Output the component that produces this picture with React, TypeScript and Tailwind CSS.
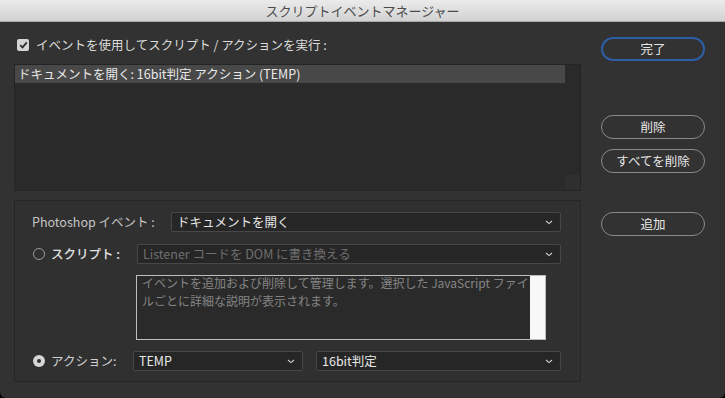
import React from "react";

const font = { fontFamily: '"Noto Sans CJK JP", "Noto Sans", sans-serif' };

function Chevron() {
  return (
    <svg width="8" height="5" viewBox="0 0 8 5" className="shrink-0">
      <path d="M1 1 L4 3.6 L7 1" fill="none" stroke="#cfcfcf" strokeWidth="1.1" />
    </svg>
  );
}

function Dropdown({ text, disabled, className }: { text: string; disabled?: boolean; className: string }) {
  return (
    <div
      className={`h-[20px] flex items-center justify-between rounded-[2px] border border-[#474747] bg-[#262626] pl-[5px] pr-[7px] ${className}`}
    >
      <span className={`text-[12.5px] leading-none whitespace-nowrap ${disabled ? "text-[#6f6f6f]" : "text-[#e8e8e8]"}`}>{text}</span>
      <Chevron />
    </div>
  );
}

function Button({ label, primary, className = "" }: { label: string; primary?: boolean; className?: string }) {
  return (
    <div
      className={`w-[104px] h-[24px] rounded-full flex items-center justify-center text-[12.5px] text-[#e6e6e6] ${
        primary ? "border-[2px] border-[#2d5ea6]" : "border border-[#8a8a8a]"
      } ${className}`}
    >
      {label}
    </div>
  );
}

export default function App() {
  return (
    <div className="w-[725px] h-[398px] bg-black" style={font}>
      <div className="w-[725px] h-[398px] bg-[#323232] rounded-b-[6px] overflow-hidden flex flex-col">
        <div className="h-[22px] shrink-0 bg-gradient-to-b from-[#ebebeb] to-[#d2d2d2] border-b border-[#a9a9a9] flex items-center justify-center text-[13px] text-[#4b4b4b]">
          スクリプトイベントマネージャー
        </div>
        <div className="flex">
          <div className="w-[581px] pl-[14px] pt-[13px]">
            <div className="h-[20px] flex items-center pl-[3px]">
              <div className="w-[12px] h-[12px] rounded-[2px] bg-[#d4d4d4] flex items-center justify-center">
                <svg width="9" height="8" viewBox="0 0 9 8">
                  <path d="M1.2 4.2 L3.5 6.4 L7.8 1.4" fill="none" stroke="#2b2b2b" strokeWidth="1.7" />
                </svg>
              </div>
              <span className="ml-[7px] text-[12.5px] text-[#dcdcdc]">イベントを使用してスクリプト / アクションを実行 :</span>
            </div>
            <div className="mt-[9px] h-[127px] border border-[#242424] bg-[#2a2a2a] flex">
              <div className="flex-1 flex flex-col">
                <div className="h-[18px] bg-[#484848] flex items-center pl-[3px] text-[12.5px] text-[#e8e8e8] whitespace-nowrap">
                  ドキュメントを開く: 16bit判定 アクション (TEMP)
                </div>
              </div>
              <div className="w-[15px] flex flex-col justify-end">
                <div className="h-[16px] bg-[#2f2f2f] border-l border-t border-[#2c2c2c]" />
              </div>
            </div>
            <div className="mt-[9px] h-[182px] border border-[#262626] bg-[#303030] pl-[17px] pr-[19px] pt-[11px]">
              <div className="h-[20px] flex items-center">
                <span className="w-[139px] text-[12.5px] text-[#c4c4c4] whitespace-nowrap">Photoshop イベント :</span>
                <Dropdown text="ドキュメントを開く" className="flex-1" />
              </div>
              <div className="mt-[12px] h-[20px] flex items-center">
                <div className="ml-[1px] w-[12px] h-[12px] rounded-full border border-[#9a9a9a]" />
                <span className="ml-[6px] w-[86px] text-[12.5px] font-medium text-[#e0e0e0] whitespace-nowrap">スクリプト :</span>
                <Dropdown text="Listener コードを DOM に書き換える" disabled className="flex-1" />
              </div>
              <div className="mt-[11px] ml-[104px] w-[410px] h-[65px] border border-[#bdbdbd] bg-[#2a2a2a] flex">
                <div className="flex-1 pl-[5px] -mt-[2px] text-[12px] leading-[18px] text-[#858585]">
                  イベントを追加および削除して管理します。選択した JavaScript ファイルごとに詳細な説明が表示されます。
                </div>
                <div className="w-[15px] bg-[#f8f8f8]" />
              </div>
              <div className="mt-[11px] h-[20px] flex items-center">
                <div className="ml-[1px] w-[12px] h-[12px] rounded-full bg-[#d6d6d6] flex items-center justify-center">
                  <div className="w-[4px] h-[4px] rounded-full bg-[#2e2e2e]" />
                </div>
                <span className="ml-[6px] w-[82px] text-[12.5px] text-[#d0d0d0] whitespace-nowrap">アクション:</span>
                <Dropdown text="TEMP" className="w-[170px]" />
                <Dropdown text="16bit判定" className="ml-[13px] flex-1" />
              </div>
            </div>
          </div>
          <div className="pl-[20px] pt-[15px] flex flex-col">
            <Button label="完了" primary />
            <Button label="削除" className="mt-[54px]" />
            <Button label="すべてを削除" className="mt-[10px]" />
            <Button label="追加" className="mt-[39px]" />
          </div>
        </div>
      </div>
    </div>
  );
}
